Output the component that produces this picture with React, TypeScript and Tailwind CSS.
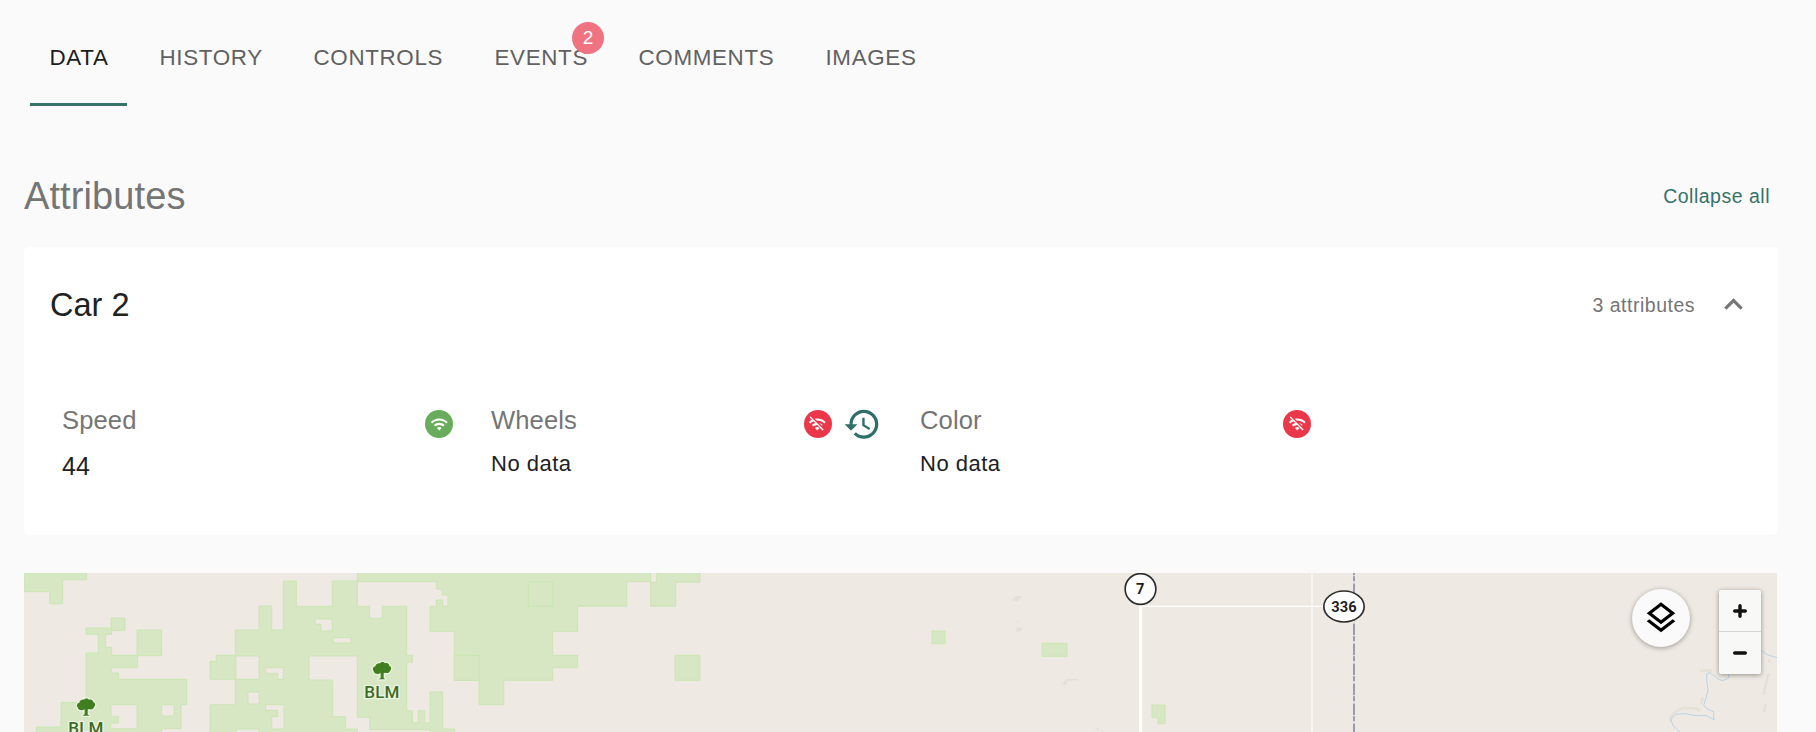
import type { ReactNode } from 'react';
import { MdExpandLess, MdHistory, MdOutlineLayers, MdWifi, MdWifiOff } from 'react-icons/md';

type Tab = { label: string; width: string; badge?: number };

const tabs: Tab[] = [
  { label: 'DATA', width: 'w-[97px] mr-[13px]' },
  { label: 'HISTORY', width: 'w-[154px]' },
  { label: 'CONTROLS', width: 'w-[181px]' },
  { label: 'EVENTS', width: 'w-[144px]', badge: 2 },
  { label: 'COMMENTS', width: 'w-[187px]' },
  { label: 'IMAGES', width: 'w-[130px]' },
];

function TabBar() {
  return (
    <nav className="flex h-[106px] pl-[30px]">
      {tabs.map((tab, i) => (
        <div
          key={tab.label}
          className={`${tab.width} ${
            i === 0 ? 'border-b-[3px] border-[#35736a] text-[#1c1c1c]' : 'text-[#616161]'
          } h-full pl-[19.5px] pt-[45px] text-[22.4px] leading-[26px] tracking-[0.65px]`}
        >
          <span className="relative inline-block">
            {tab.label}
            {tab.badge !== undefined && (
              <span className="absolute -top-[23px] left-[77.5px] flex size-8 items-center justify-center rounded-full bg-[#f07381] text-[19px] tracking-normal text-white">
                {tab.badge}
              </span>
            )}
          </span>
        </div>
      ))}
    </nav>
  );
}

function Signal({ online }: { online: boolean }) {
  return (
    <span
      className={`${online ? 'bg-[#68ad5c]' : 'bg-[#ec374b]'} flex size-7 items-center justify-center rounded-full text-white`}
    >
      {online ? <MdWifi size={18.5} /> : <MdWifiOff size={18.5} />}
    </span>
  );
}

type AttributeProps = { name: string; value: ReactNode; online: boolean; history?: boolean; className: string };

function Attribute({ name, value, online, history, className }: AttributeProps) {
  return (
    <div className={`${className} flex h-[90px] items-start justify-between`}>
      <div>
        <div className="-mt-px text-[25.6px] leading-[30px] tracking-[0.1px] text-[#757575]">{name}</div>
        {value}
      </div>
      <div className="flex items-start pt-[4px]">
        <Signal online={online} />
        {history && <MdHistory size={38.5} className="-mt-[5px] ml-[11px] mr-px text-[#2f6f68]" />}
      </div>
    </div>
  );
}

const noData = <div className="mt-[16px] text-[22px] leading-[26px] tracking-[0.5px] text-[#212121]">No data</div>;

const parcels = [
  'M72 39H260V59H188V131H149V95H72Z',
  'M333 174H375V212H333Z',
  'M411 210H485V287H411Z',
  'M258 204H335V223H317V262H335V286H413V323H334V339H356V358H560V434H543V506H485V530H109V501H183V427H258V279H295V223H258ZM333 434V470H356V489H332V506H411V434ZM485 434V468H522V434Z',
  'M850 63H889V139H997V63H1072V30H1952V65H1880V139H1733V214H1658V286H1733V323H1658V361H1511V434H1437V361H1363V214H1290V139H1309V120H1328V139H1344V105H1326V87H1309V65H1072V139H1109V175H1147V139H1220V286H1237V307H1220V452H1237V489H1255V452H1274V489H1290V396H1328V507H1364V530H1290V509H1109V472H1072V288H927V360H998V470H1037V507H1072V530H777V507H708V530H630V434H706V358H630V304H649V286H706V210H777V138H815V210H850ZM945 177V193H963V213H997V177ZM999 233V249H1053V233ZM708 288V358H777V288ZM797 323V340H833V358H850V323ZM744 396V432H777V396ZM797 434V451H833V470H815V507H852V434Z',
  'M1970 30H2100V67H2027V139H1952V67H1970Z',
  'M2025 286H2100V361H2025Z',
  'M1585 65H1658V139H1585Z',
  'M1363 286H1438V361H1363Z',
  'M2796 213H2835V251H2796Z',
  'M3126 250H3201V289H3126Z',
  'M3456 435H3495V491H3474V473H3456Z',
];

function Park({ x, y }: { x: number; y: number }) {
  return (
    <g transform={`translate(${x} ${y})`} stroke="#edf3e2" strokeWidth="8" paintOrder="stroke" strokeLinejoin="round">
      <path
        fill="#417e20"
        d="M-4 14C-14 20-24 16-25 8C-30 2-26-5-20-6C-19-14-10-17-6-15C-3-20 6-20 9-15C17-18 22-12 22-7C29-5 29 4 24 7C23 14 15 16 9 13L5 15V29L10 33H-11L-4 29Z"
      />
      <text y="88" textAnchor="middle" fill="#3c6b22" fontFamily="Roboto, sans-serif" fontWeight="500" fontSize="51" letterSpacing="0.5">
        BLM
      </text>
    </g>
  );
}

function MapCanvas() {
  return (
    <svg viewBox="72 39 5259 477" preserveAspectRatio="none" className="block h-full w-full">
      <rect x="72" y="39" width="5259" height="477" fill="#eee9e2" />
      {parcels.map((d) => (
        <path key={d} d={d} fill="#d7e7c3" stroke="#c6e4ae" strokeWidth="2.5" fillRule="evenodd" />
      ))}
      <g fill="#e6e1d8">
        <path d="M3034 119L3048 108L3067 108L3054 125ZM3044 180L3056 184V191ZM3050 202H3066V212L3048 215ZM3183 373L3201 357H3232L3238 365L3228 361L3204 363L3196 375ZM3280 511L3292 504L3300 510ZM3302 509L3312 516H3304Z" />
      </g>
      <g fill="none" stroke="#e6e1d6" strokeWidth="8">
        <path d="M5100 333Q5120 330 5136 332M5107 412L5104 432M5308 297V308M5307 340Q5297 362 5297 380Q5290 395 5294 405M5297 432L5292 455M5010 487Q5010 462 5030 455Q5045 440 5064 445Q5082 440 5100 452" />
      </g>
      <g fill="none" stroke="#b3d3ea" strokeWidth="2.800">
        <path d="M5284 271Q5300 288 5318 289L5331 293M5186 343V354L5168 362L5156 358L5130 338L5120 342V360L5124 392L5111 436L5124 448L5141 455V474L5144 480L5118 466L5088 467L5056 461L5026 463Q5012 473 5014 484L5020 498L5040 516" />
      </g>
      <g fill="none" stroke="#ffffff">
        <path d="M3422 130V516" strokeWidth="9" />
        <path d="M3422 139H3980" strokeWidth="4" />
        <path d="M3936 39V516" strokeWidth="4" opacity=".8" />
      </g>
      <path d="M4062 39V516" stroke="#dddde0" strokeWidth="6" />
      <path d="M4062 11V516" stroke="#9b9dad" strokeWidth="6" strokeDasharray="34 4 14 8" />
      <g fill="#fff" stroke="#2c2c2c" strokeWidth="5">
        <ellipse cx="3421.500" cy="87" rx="46" ry="46" />
        <ellipse cx="4032" cy="139.500" rx="60.500" ry="46.500" />
      </g>
      <g fill="#1f1f1f" fontFamily="Roboto, sans-serif" fontWeight="700" fontSize="44" textAnchor="middle">
        <text x="3421" y="103">7</text>
        <text x="4032" y="155" letterSpacing="0.5">336</text>
      </g>
      <Park x={258} y={434} />
      <Park x={1146} y={325} />
    </svg>
  );
}

function ZoomControls() {
  return (
    <div className="absolute right-[16px] top-[17px] h-[84px] w-[42px] rounded-[2px] bg-[#f8f8f7] shadow-[0_1px_5px_rgba(0,0,0,0.4)]">
      <div className="flex h-[42px] items-center justify-center border-b border-[#d5d5d3]">
        <svg width="14" height="14" viewBox="0 0 14 14">
          <path d="M7 1.700V12.300M1.700 7H12.300" stroke="#111" strokeWidth="3.400" strokeLinecap="round" />
        </svg>
      </div>
      <div className="flex h-[42px] items-center justify-center">
        <svg width="14" height="14" viewBox="0 0 14 14">
          <path d="M1.700 7H12.300" stroke="#111" strokeWidth="3.400" strokeLinecap="round" />
        </svg>
      </div>
    </div>
  );
}

export default function App() {
  return (
    <div className="h-[732px] w-[1816px] overflow-hidden bg-[#fafafa] font-['Liberation_Sans',Arial,sans-serif]">
      <TabBar />
      <header className="flex h-[141px] items-center justify-between pl-[24px] pr-[46px] pt-[63px] pb-[26px]">
        <h1 className="mt-[1px] text-[38px] leading-[52px] tracking-[0.1px] text-[#757575]">Attributes</h1>
        <button className="mt-[1px] text-[19.5px] leading-[24px] tracking-[0.5px] text-[#35736a]">Collapse all</button>
      </header>
      <section className="ml-[24px] h-[288px] w-[1754px] rounded-[5px] bg-white">
        <div className="flex h-[115px] items-center justify-between pl-[26px] pr-[26px]">
          <h2 className="text-[32.5px] leading-[40px] text-[#212121]">Car 2</h2>
          <div className="flex items-center text-[#757575]">
            <span className="text-[19.5px] leading-[24px] tracking-[0.5px]">3 attributes</span>
            <MdExpandLess size={37} className="ml-[20px]" />
          </div>
        </div>
        <div className="flex pl-[38px] pt-[44px]">
          <Attribute
            name="Speed"
            online
            className="w-[391px] mr-[38px]"
            value={<div className="mt-[16px] text-[25px] leading-[30px] text-[#212121]">44</div>}
          />
          <Attribute name="Wheels" online={false} history value={noData} className="w-[391px] mr-[38px]" />
          <Attribute name="Color" online={false} value={noData} className="w-[391px]" />
        </div>
      </section>
      <div className="relative ml-[24px] mt-[38px] h-[159px] w-[1753px] overflow-hidden">
        <MapCanvas />
        <button className="absolute right-[87px] top-[16px] flex size-[58px] items-center justify-center rounded-full bg-[#fafafa] text-black shadow-[0_1px_5px_rgba(0,0,0,0.35)]">
          <MdOutlineLayers size={38} />
        </button>
        <ZoomControls />
      </div>
    </div>
  );
}
